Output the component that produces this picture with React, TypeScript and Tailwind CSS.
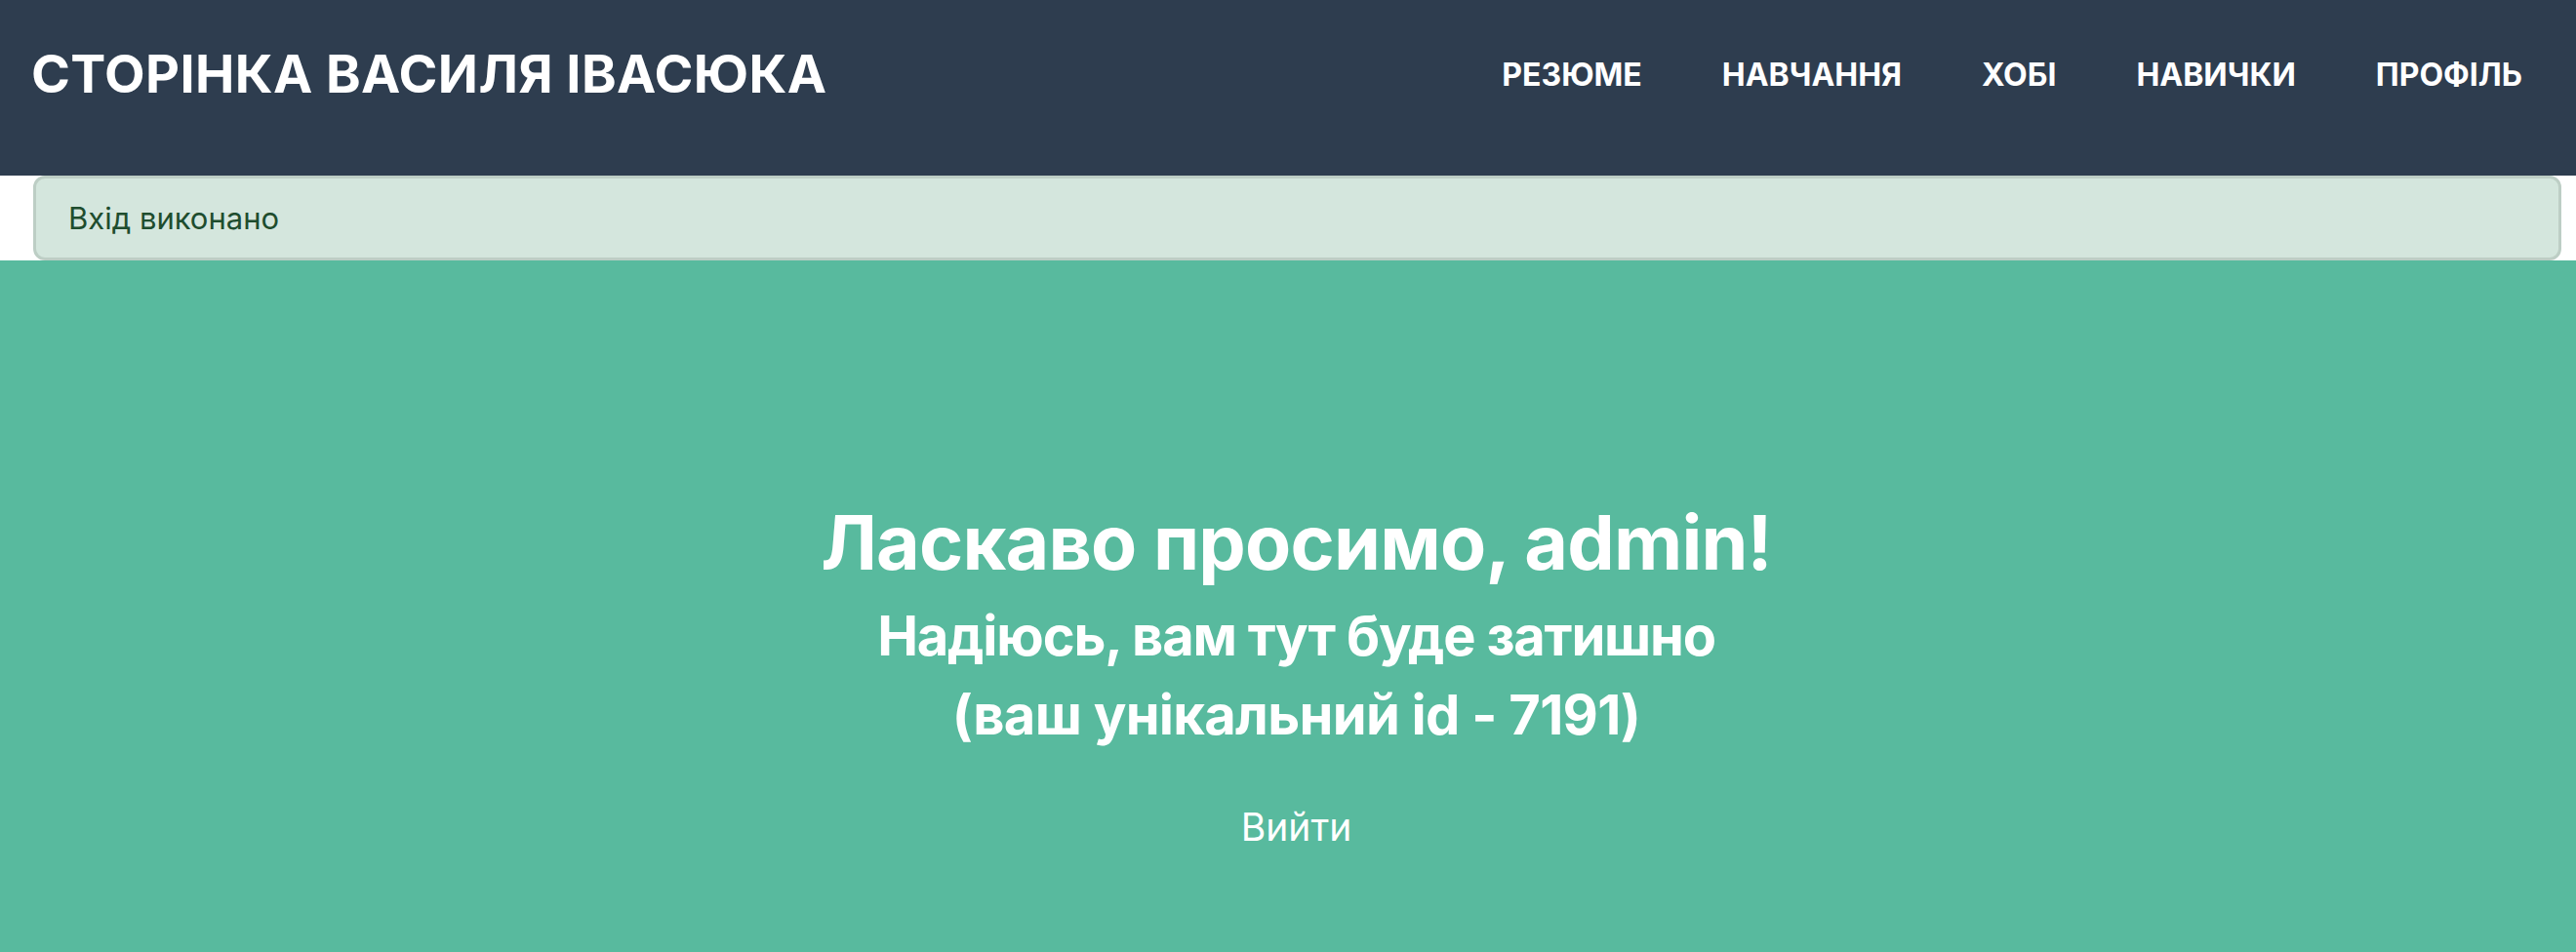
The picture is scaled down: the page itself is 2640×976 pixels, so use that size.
const navItems = ['РЕЗЮМЕ', 'НАВЧАННЯ', 'ХОБІ', 'НАВИЧКИ', 'ПРОФІЛЬ']

export default function App() {
  return (
    <div className="min-h-[976px] bg-white font-['Inter','Noto_Sans',sans-serif]">
      {/* Header */}
      <header className="h-[180px] bg-[#2e3d4f] pt-[44px] pl-[32px] pr-[55px]">
        <div className="flex h-[65px] items-center justify-between">
          <h1 className="text-[54px] leading-[1.2] font-bold tracking-[0.4px] text-white">
            СТОРІНКА ВАСИЛЯ ІВАСЮКА
          </h1>
          <nav className="flex items-center gap-[82px]">
            {navItems.map((item) => (
              <a key={item} href="#" className="text-[32px] font-bold text-white">
                {item}
              </a>
            ))}
          </nav>
        </div>
      </header>

      {/* Flash message */}
      <div className="ml-[34px] mr-[15px] rounded-[12px] border-[3px] border-[#bdcec5] bg-[#d4e6dd] py-[18px] pl-[33px]">
        <p className="text-[31px] leading-[45px] text-[#1e4d2e]">Вхід виконано</p>
      </div>

      {/* Welcome */}
      <main className="flex min-h-[709px] flex-col items-center bg-[#58ba9e] pt-[243px] pl-[17px] text-center text-white">
        <h2 className="mb-[10px] text-[77px] leading-[1.2] font-bold tracking-[-0.8px]">
          Ласкаво просимо, admin!
        </h2>
        <p className="text-[56px] leading-[81px] font-bold tracking-[-1.2px]">
          Надіюсь, вам тут буде затишно
        </p>
        <p className="text-[56px] leading-[81px] font-bold tracking-[-0.7px]">
          (ваш унікальний id - 7191)
        </p>
        <a href="#" className="mt-[45px] text-[39px] leading-[1.5] text-white">
          Вийти
        </a>
      </main>
    </div>
  )
}
